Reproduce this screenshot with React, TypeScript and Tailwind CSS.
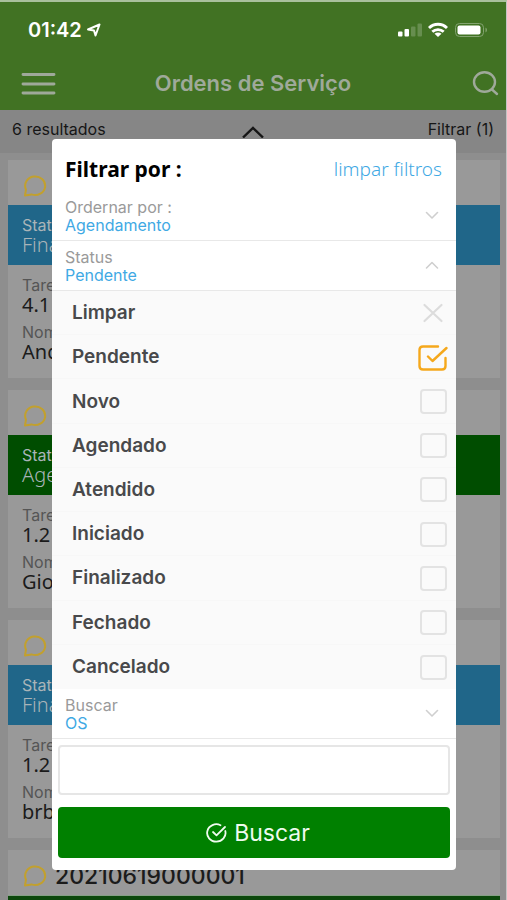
import { useState } from "react";

type Card = {
  id: number;
  number?: string;
  tone: string;
  details?: { status: string; task: string; client: string };
};

const cards: Card[] = [
  { id: 4, tone: "bg-[#206689]", details: { status: "Finalizado", task: "4.1", client: "Anderson" } },
  { id: 3, tone: "bg-[#004d00]", details: { status: "Agendado", task: "1.2", client: "Giovanni" } },
  { id: 2, tone: "bg-[#206689]", details: { status: "Finalizado", task: "1.2", client: "brb" } },
  { id: 1, number: "20210619000001", tone: "bg-[#0c480c] border-t border-[#86a086]" },
];

const options = ["Pendente", "Novo", "Agendado", "Atendido", "Iniciado", "Finalizado", "Fechado", "Cancelado"];

function Bubble() {
  return (
    <svg className="h-6 w-6 shrink-0" viewBox="0 0 24 24" fill="none" stroke="#c2a02e" strokeWidth="2" strokeLinejoin="round">
      <path d="M2 21.500 L3 15.500 A10 9.300 0 1 1 8.500 20.400 Z" />
    </svg>
  );
}

function Chevron({ up = false }: { up?: boolean }) {
  return (
    <svg className="h-3 w-4" viewBox="0 0 16 12" fill="none" stroke="#cfcfcf" strokeWidth="1.6" strokeLinecap="round" strokeLinejoin="round">
      <path d={up ? "M2.500 8 L8 2.500 L13.500 8" : "M2.500 2.500 L8 8 L13.500 2.500"} />
    </svg>
  );
}

function Section({ label, value, open = false }: { label: string; value: string; open?: boolean }) {
  return (
    <button
      type="button"
      aria-expanded={open}
      className="flex h-[50px] w-full items-center justify-between border-b border-[#e8e8e8] pt-px pr-4 pl-[13px] text-left text-base leading-[18px]"
    >
      <span>
        <span className="block text-[#9a9a9a]">{label}</span>
        <span className="block text-[#3fa9e4]">{value}</span>
      </span>
      <Chevron up={open} />
    </button>
  );
}

export default function App() {
  const [selected, setSelected] = useState<string[]>(["Pendente"]);
  const toggle = (name: string) =>
    setSelected((list) => (list.includes(name) ? list.filter((item) => item !== name) : [...list, name]));

  return (
    <div className="relative h-screen overflow-hidden border-t-2 border-r border-t-[#a9c09c] border-r-[#c4c4c4] bg-[#8e8e8e] font-[Inter,sans-serif]">
      <header className="h-[108px] bg-[#417223]">
        <div className="flex h-14 items-center justify-between pr-[18px] pl-7 text-white">
          <div className="flex items-center gap-1">
            <time className="text-xl leading-6 font-semibold">01:42</time>
            <svg className="h-4 w-4" viewBox="0 0 16 16" fill="none" stroke="currentColor" strokeWidth="2" strokeLinejoin="round">
              <path d="M2 7.500 L13.500 2.500 L9.500 13.500 L8 8.500 Z" />
            </svg>
          </div>
          <div className="flex items-center gap-1.5">
            <svg className="h-4 w-6" viewBox="0 0 24 16" fill="#fff">
              <rect x="0" y="9.500" width="4.500" height="5" rx="1" />
              <rect x="6.500" y="7" width="4.500" height="7.500" rx="1" />
              <rect x="13" y="4.500" width="4.500" height="10" rx="1" opacity=".2" />
              <rect x="19.500" y="1.500" width="4.500" height="13" rx="1" opacity=".2" />
            </svg>
            <svg className="h-4 w-5" viewBox="0 0 20 16" fill="none" stroke="#fff" strokeWidth="2.800">
              <path d="M1 6 C6 1 14 1 19 6" />
              <path d="M4.300 9.800 C7.500 6.800 12.500 6.800 15.700 9.800" />
              <path d="M10 15 L6.500 11.800 C8.500 10.200 11.500 10.200 13.500 11.800 Z" fill="#fff" stroke="none" />
            </svg>
            <svg className="h-4 w-[34px]" viewBox="0 0 34 16">
              <rect x="1.500" y="1.500" width="28" height="13" rx="4" fill="none" stroke="#83a370" />
              <rect x="3.500" y="3.500" width="23" height="9" rx="2" fill="#fff" />
              <path d="M31.500 5.500 C33.500 6.500 33.500 9.500 31.500 10.500 Z" fill="#83a370" />
            </svg>
          </div>
        </div>
        <div className="grid h-[50px] grid-cols-[1fr_auto_1fr] items-center text-[#9fa99a]">
          <button type="button" aria-label="Menu" className="justify-self-start pl-[21px]">
            <svg className="h-7 w-[35px]" viewBox="0 0 35 28" stroke="currentColor" strokeWidth="2.900" strokeLinecap="round">
              <path d="M2 5.500 H33 M2 15 H33 M2 24 H33" />
            </svg>
          </button>
          <h1 className="text-[22px] leading-7 font-semibold">Ordens de Serviço</h1>
          <button type="button" aria-label="Pesquisar" className="justify-self-end pr-[7px]">
            <svg className="h-7 w-7" viewBox="0 0 28 28" fill="none" stroke="currentColor" strokeWidth="2.400" strokeLinecap="round">
              <ellipse cx="13.500" cy="13" rx="10.500" ry="9.800" />
              <path d="M21 20.500 L26 25" />
            </svg>
          </button>
        </div>
      </header>

      <div className="grid h-[43px] grid-cols-[1fr_auto_1fr] items-start bg-[#868686] px-3 pt-[9px] text-base leading-5 text-[#161616]">
        <span>6 resultados</span>
        <svg className="mt-[7px] h-3 w-6" viewBox="0 0 24 12" fill="none" stroke="#161616" strokeWidth="2.400">
          <path d="M2 11.500 L12 2 L22 11.500" />
        </svg>
        <button type="button" className="justify-self-end leading-5">Filtrar (1)</button>
      </div>

      <main className="flex flex-col gap-3 pt-[7px] pr-[6px] pl-2">
        {cards.map((card) => (
          <article key={card.id} className="h-[218px] shrink-0 bg-[#999]">
            <div className="flex h-[45px] items-center gap-2 pt-1.5 pl-[15px]">
              <Bubble />
              {card.number && <h2 className="text-[23px] leading-7 font-medium text-[#1b1b1b]">{card.number}</h2>}
            </div>
            <div className={`h-[60px] pt-2.5 pl-[14px] text-[#a9b4b8] ${card.tone}`}>
              {card.details && (
                <>
                  <p className="text-base leading-5">Status</p>
                  <p className="font-['Noto_Sans',sans-serif] text-xl leading-5 font-light">{card.details.status}</p>
                </>
              )}
            </div>
            {card.details && (
              <div className="pt-2.5 pl-[14px] text-base leading-5 text-[#555]">
                <p>Tarefa</p>
                <p className="font-['Noto_Sans',sans-serif] text-xl leading-5 text-[#1b1b1b]">{card.details.task}</p>
                <p className="mt-[7px]">Nome</p>
                <p className="font-['Noto_Sans',sans-serif] text-xl leading-5 text-[#1b1b1b]">{card.details.client}</p>
              </div>
            )}
          </article>
        ))}
      </main>

      <div className="absolute inset-0 pt-[137px] pr-[50px] pl-[52px]">
        <section role="dialog" aria-label="Filtrar por" className="overflow-hidden rounded bg-white pb-3">
          <div className="flex h-[52px] items-center justify-between pt-2 pr-3.5 pl-[13px] font-['Noto_Sans',sans-serif]">
            <h2 className="text-[21px] leading-6 font-bold text-black">Filtrar por :</h2>
            <button type="button" className="text-[19px] leading-6 font-light text-[#3fa9e4]" onClick={() => setSelected([])}>
              limpar filtros
            </button>
          </div>
          <Section label="Ordernar por :" value="Agendamento" />
          <Section label="Status" value="Pendente" open />
          <div className="grid h-[398px] grid-rows-9 divide-y divide-[#f7f7f7] bg-[#fafafa] text-[19px] leading-6 font-semibold text-[#48494b]">
            <button type="button" className="flex items-center justify-between pt-px pr-3 pl-5" onClick={() => setSelected([])}>
              Limpar
              <svg className="h-[22px] w-[22px]" viewBox="0 0 22 22" stroke="#dcdcdc" strokeWidth="2.200" strokeLinecap="round">
                <path d="M2.500 3 L19.500 19 M19.500 3 L2.500 19" />
              </svg>
            </button>
            {options.map((name) => {
              const checked = selected.includes(name);
              return (
                <label key={name} className="flex items-center justify-between pt-px pr-[9px] pl-5">
                  {name}
                  <span className="relative flex">
                    <input
                      type="checkbox"
                      checked={checked}
                      onChange={() => toggle(name)}
                      className="h-[25px] w-[27px] appearance-none rounded border-2 border-[#e3e3e3] checked:border-transparent"
                    />
                    {checked && (
                      <svg className="pointer-events-none absolute inset-y-0 -left-0.5 h-[26px] w-[30px]" viewBox="0 0 30 26" fill="none" stroke="#f5a81c" strokeWidth="2.400" strokeLinecap="round" strokeLinejoin="round">
                        <path d="M20 1.500 H5 Q1.500 1.500 1.500 5 V21 Q1.500 24.500 5 24.500 H24 Q27.500 24.500 27.500 21 V13" />
                        <path d="M10 11.500 L14.500 16 L28.500 3" />
                      </svg>
                    )}
                  </span>
                </label>
              );
            })}
          </div>
          <Section label="Buscar" value="OS" />
          <div className="flex flex-col gap-3 px-1.5 pt-1.5">
            <input type="text" aria-label="Buscar OS" className="h-[50px] w-full rounded border-2 border-[#e6e6e6] bg-white px-3 text-lg" />
            <button type="submit" className="flex h-[51px] w-full items-center justify-center gap-[7px] rounded bg-[#008000] pt-px pl-2 text-[23px] leading-7 text-[#effbef]">
              <svg className="h-5 w-[21px]" viewBox="0 0 21 20" fill="none" stroke="currentColor" strokeWidth="1.800" strokeLinecap="round" strokeLinejoin="round">
                <path d="M19.300 8 A9.200 8.700 0 1 1 14.500 2.200" />
                <path d="M7 9 L10.500 12.300 L19 4" />
              </svg>
              Buscar
            </button>
          </div>
        </section>
      </div>
    </div>
  );
}
